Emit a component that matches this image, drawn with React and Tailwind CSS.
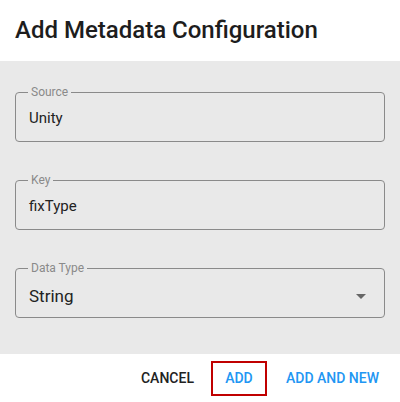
import React from "react";

const fields = [
    { label: "Source", value: "Unity" },
    { label: "Key", value: "fixType" },
];

function OutlinedField({ label, value, select }) {
    return (
        <fieldset className="relative h-[56px] rounded-[4px] border border-[#8a8a8a] px-[13px] m-0">
            <legend className="ml-[-1px] px-[3px] text-[12px] leading-[12px] text-[#8a8a8a]">
                {label}
            </legend>
            <div
                className={
                    select
                        ? "flex items-center justify-between pt-[10px] text-[17px] text-[#222]"
                        : "pt-[9px] text-[15px] text-[#222]"
                }>
                <span>{value}</span>
                {select && (
                    <svg width="10" height="5" viewBox="0 0 10 5" className="mr-[5px]">
                        <path d="M0 0 L10 0 L5 5 Z" fill="#666" />
                    </svg>
                )}
            </div>
        </fieldset>
    );
}

export default function App() {
    return (
        <div
            className="w-[400px] h-[402px] bg-white flex flex-col"
            style={{ fontFamily: "Roboto, 'Liberation Sans', sans-serif" }}>
            {/* Title */}
            <div className="h-[61px] px-[15px] flex items-center">
                <h1 className="text-[24px] font-medium text-[#1d1d1d] pb-[2px]">
                    Add Metadata Configuration
                </h1>
            </div>

            {/* Body */}
            <div className="h-[293px] bg-[#e9e9e9] px-[15px] pt-[25px] flex flex-col gap-[32px]">
                {fields.map((f) => (
                    <OutlinedField key={f.label} label={f.label} value={f.value} />
                ))}
                <OutlinedField label="Data Type" value="String" select />
            </div>

            {/* Actions */}
            <div className="flex-1 flex items-center justify-end pr-[21px] gap-[17px]">
                <button className="text-[14px] font-medium text-[#222]">
                    CANCEL
                </button>
                <button className="w-[56px] h-[35px] border-2 border-[#c00000] text-[14px] font-medium text-[#2196f3]">
                    ADD
                </button>
                <button className="text-[14px] font-medium text-[#2196f3] ml-[2px]">
                    ADD AND NEW
                </button>
            </div>
        </div>
    );
}
